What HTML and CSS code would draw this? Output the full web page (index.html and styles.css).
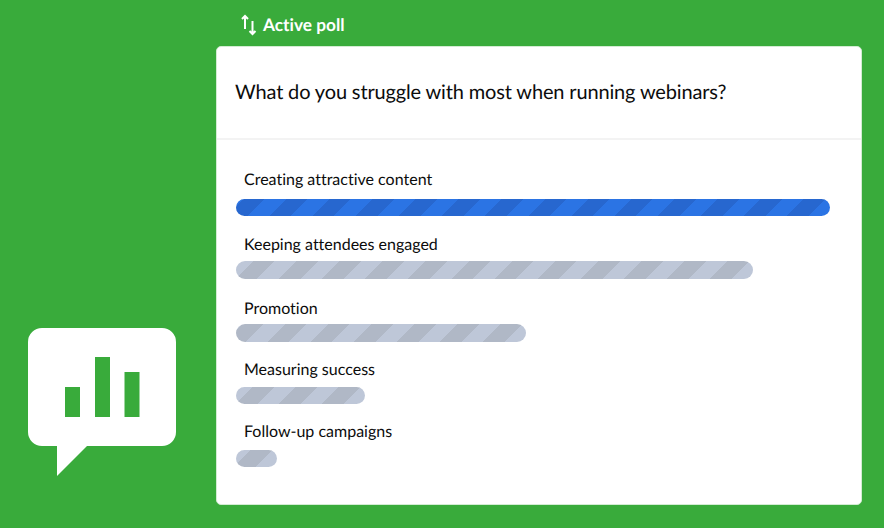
FILE: index.html
```html
<!DOCTYPE html>
<html lang="en">
<head>
    <meta charset="UTF-8">
    <meta name="viewport" content="width=device-width, initial-scale=1.0">
    <title>Active poll</title>
    <link rel="stylesheet" href="styles.css">
</head>
<body>
    <div class="page">
        <div class="side">
            <svg class="bubble" width="148" height="148" viewBox="0 0 148 148">
                <path fill="#fff" fill-rule="evenodd" d="M14 0H134A14 14 0 0 1 148 14V104A14 14 0 0 1 134 118H59L29 148V118H14A14 14 0 0 1 0 104V14A14 14 0 0 1 14 0ZM37 59V89H52V59ZM67 29V89H82V29ZM96.500 44V89H111.500V44Z"/>
            </svg>
        </div>
        <div class="main">
            <div class="poll-title">
                <svg class="swap" width="18" height="22" viewBox="0 0 18 22">
                    <path fill="none" stroke="#fff" stroke-width="2" d="M5 2V15M2 5L5 2L8 5M12.500 7V20M9.500 17L12.500 20L15.500 17"/>
                </svg>
                <span>Active poll</span>
            </div>
            <div class="card">
                <div class="question">What do you struggle with most when running webinars?</div>
                <div class="answers">
                    <div class="answer">
                        <div class="answer-label">Creating attractive content</div>
                        <div class="bar bar-top" style="width: 594px"></div>
                    </div>
                    <div class="answer">
                        <div class="answer-label">Keeping attendees engaged</div>
                        <div class="bar" style="width: 517px"></div>
                    </div>
                    <div class="answer">
                        <div class="answer-label">Promotion</div>
                        <div class="bar" style="width: 290px"></div>
                    </div>
                    <div class="answer">
                        <div class="answer-label">Measuring success</div>
                        <div class="bar" style="width: 129px"></div>
                    </div>
                    <div class="answer">
                        <div class="answer-label">Follow-up campaigns</div>
                        <div class="bar" style="width: 41px"></div>
                    </div>
                </div>
            </div>
        </div>
    </div>
</body>
</html>
```

FILE: styles.css
```css
html, body {
    margin: 0;
    height: 100%;
}
body {
    font-family: Lato, "Liberation Sans", sans-serif;
    background-color: #39ab3b;
    color: #0c0c0c;
    text-rendering: geometricPrecision;
    font-variant-ligatures: none;
}
.page {
    display: flex;
    height: 528px;
    overflow: hidden;
}
.side {
    width: 216px;
    padding: 0 0 52px 28px;
    box-sizing: border-box;
    display: flex;
    align-items: flex-end;
}
.bubble {
    display: block;
}
.main {
    width: 646px;
}
.poll-title {
    height: 48px;
    margin-bottom: -2px;
    padding-left: 24px;
    display: flex;
    align-items: center;
    gap: 5px;
    color: #fff;
    font-size: 17.300px;
    font-weight: 700;
}
.swap {
    margin-top: 2px;
}
.card {
    height: 459px;
    box-sizing: border-box;
    background-color: #fff;
    border: 1px solid #d3ecd3;
    border-radius: 5px;
}
.question {
    height: 93px;
    box-sizing: border-box;
    padding: 31px 0 0 18px;
    font-size: 20px;
    line-height: 28px;
    letter-spacing: -0.150px;
    border-bottom: 2px solid #f3f3f3;
}
.answers {
    padding: 13.250px 32px 0 19px;
}
.answer {
    height: 62.750px;
    display: flex;
    flex-direction: column;
    justify-content: flex-end;
}
.answer-label {
    padding-left: 8px;
    font-size: 16px;
    line-height: 22px;
    margin-bottom: 6px;
}
.answer:nth-child(1) .answer-label {
    margin-bottom: 8px;
}
.answer:nth-child(2) .answer-label {
    margin-bottom: 5px;
}
.answer:nth-child(3) .answer-label {
    margin-bottom: 4px;
}
.answer:nth-child(5) .answer-label {
    margin-bottom: 7px;
}
.bar {
    height: 17.500px;
    border-radius: 9px;
    filter: blur(0.5px);
    background-image: repeating-linear-gradient(-45deg, #bec7d8 0, #bec7d8 15.250px, #b0b8c6 15.250px, #b0b8c6 30.500px);
}
.bar-top {
    background-image: repeating-linear-gradient(-45deg, #2b74e4 0, #2b74e4 15.250px, #2767cf 15.250px, #2767cf 30.500px);
}
```
